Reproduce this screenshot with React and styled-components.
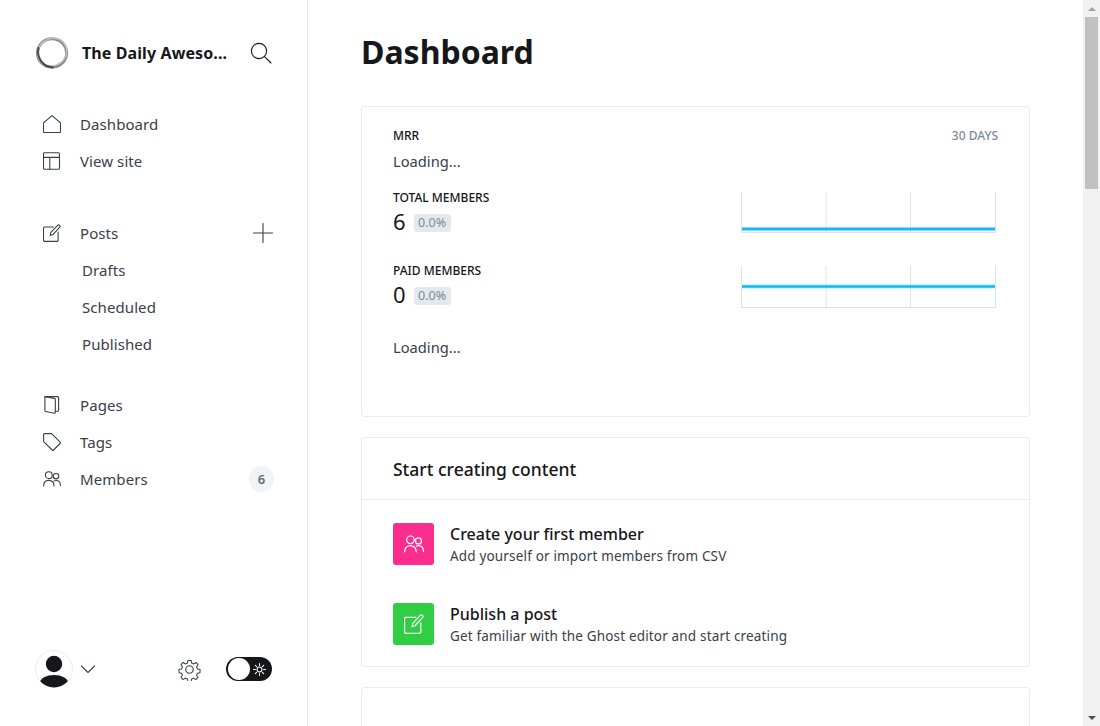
import React from 'react';
import styled, { createGlobalStyle } from 'styled-components';

const GlobalStyle = createGlobalStyle`
  html, body {
    margin: 0;
    height: 100%;
    overflow: hidden;
    background: #fff;
    font-family: "Noto Sans", "Open Sans", sans-serif;
    color: #15171a;
  }
  * { box-sizing: border-box; }
`;

const Page = styled.div`
  display: flex;
  width: 1100px;
  height: 726px;
  overflow: hidden;
`;

const Sidebar = styled.aside`
  flex: 0 0 308px;
  display: flex;
  flex-direction: column;
  padding: 36px 33px 38px 35px;
  border-right: 1px solid #e9ecef;
`;

const Brand = styled.div`
  display: flex;
  align-items: center;
  height: 34px;
  margin-bottom: 35px;
`;

const BrandName = styled.span`
  margin-left: 13px;
  width: 150px;
  font-size: 16px;
  font-weight: 700;
  letter-spacing: 0.1px;
  white-space: nowrap;
`;

const SearchButton = styled.span`
  display: flex;
  margin-left: 18px;
`;

const NavGroup = styled.nav`
  display: flex;
  flex-direction: column;
  margin-top: ${(p) => p.$gap || 0}px;
`;

const NavRow = styled.div`
  display: flex;
  align-items: center;
  height: 37px;
  padding-left: ${(p) => (p.$sub ? 47 : 8)}px;
  font-size: 15px;
  letter-spacing: 0.08px;
  color: #394047;
`;

const NavIcon = styled.span`
  display: flex;
  width: 18px;
  margin-right: 19px;
`;

const NavEnd = styled.span`
  display: flex;
  margin-left: auto;
  margin-right: ${(p) => p.$right || 0}px;
`;

const Badge = styled.span`
  display: flex;
  align-items: center;
  justify-content: center;
  width: 25px;
  height: 26px;
  border-radius: 50%;
  background: #f1f3f4;
  color: #626d79;
  font-size: 13px;
  font-weight: 600;
`;

const SideFooter = styled.div`
  display: flex;
  align-items: center;
  margin-top: auto;
`;

const UserMenu = styled.div`
  display: flex;
  align-items: center;
  gap: 8px;
  margin-right: auto;
`;

const Toggle = styled.div`
  display: flex;
  align-items: center;
  justify-content: space-between;
  width: 46px;
  height: 24px;
  margin: 0 2px 0 25px;
  padding: 0 6px 0 2px;
  border-radius: 12px;
  background: #15171a;
`;

const Knob = styled.span`
  width: 22px;
  height: 22px;
  border-radius: 50%;
  background: #fff;
`;

const Main = styled.main`
  flex: 1;
  min-width: 0;
  height: 726px;
  overflow: hidden;
  padding: 30px 53px 0 53px;
`;

const Title = styled.h1`
  margin: 0 0 32px;
  font-size: 32px;
  line-height: 44px;
  font-weight: 700;
`;

const Card = styled.section`
  border: 1px solid #e9ecef;
  border-radius: 3px;
  margin-bottom: 20px;
  min-height: ${(p) => p.$height || 0}px;
`;

const MetricsBody = styled.div`
  padding: 20px 31px 0;
`;

const MetricHead = styled.div`
  display: flex;
  justify-content: space-between;
`;

const Label = styled.div`
  font-size: 12px;
  line-height: 18px;
  font-weight: 500;
  color: #15171a;
`;

const Range = styled.div`
  font-size: 12px;
  line-height: 18px;
  font-weight: 500;
  color: #7c8b9a;
`;

const Loading = styled.div`
  font-size: 14.7px;
  line-height: 20px;
  color: #394047;
  margin-top: ${(p) => p.$top}px;
  margin-bottom: ${(p) => p.$bottom || 0}px;
`;

const StatRow = styled.div`
  display: flex;
  justify-content: space-between;
  height: 73px;
`;

const NumberLine = styled.div`
  display: flex;
  align-items: center;
  gap: 8px;
  margin-top: 1px;
`;

const Value = styled.span`
  font-size: 22px;
  line-height: 26px;
`;

const Pill = styled.span`
  width: 37px;
  height: 18px;
  margin-top: 4px;
  border-radius: 3px;
  background: #e5e9ed;
  color: #7c8b9a;
  font-size: 12.5px;
  line-height: 18px;
  text-align: center;
`;

const ChartWrap = styled.div`
  display: flex;
  margin: ${(p) => p.$top}px 2px 0 0;
`;

const CardHead = styled.div`
  display: flex;
  align-items: center;
  height: 62px;
  padding: 1px 31px 0;
  border-bottom: 1px solid #e9ecef;
  font-size: 17.5px;
  font-weight: 500;
`;

const ActionList = styled.div`
  display: flex;
  flex-direction: column;
  gap: 38px;
  padding: 23px 31px 21px;
`;

const Action = styled.div`
  display: flex;
  align-items: flex-start;
  gap: 16px;
  height: 42px;
`;

const Tile = styled.span`
  display: flex;
  align-items: center;
  justify-content: center;
  width: 41px;
  height: 42px;
  border-radius: 3px;
  background: ${(p) => p.$color};
`;

const ActionTitle = styled.div`
  font-size: 16px;
  line-height: 22px;
  font-weight: 500;
`;

const ActionText = styled.div`
  font-size: 13.5px;
  line-height: 22px;
  letter-spacing: 0.17px;
  color: #394047;
`;

const HiddenHead = styled.div`
  padding: 34px 31px 20px;
  font-size: 17.5px;
  line-height: 24px;
  font-weight: 500;
`;

const ScrollTrack = styled.div`
  flex: 0 0 17px;
  display: flex;
  flex-direction: column;
  align-items: center;
  background: #f1f1f1;
`;

const ScrollButton = styled.div`
  display: flex;
  align-items: center;
  justify-content: center;
  flex: 0 0 17px;
  margin-top: ${(p) => (p.$end ? 'auto' : 0)};
`;

const Arrow = styled.span`
  width: 0;
  height: 0;
  border-left: 4px solid transparent;
  border-right: 4px solid transparent;
  border-${(p) => (p.$down ? 'top' : 'bottom')}: 4px solid ${(p) => (p.$down ? '#505050' : '#a3a3a3')};
`;

const ScrollThumb = styled.div`
  width: 13px;
  height: 172px;
  background: #c1c1c1;
`;

const Line = ({ size = 18, color = '#394047', width = 1.1, children, view = '0 0 18 18' }) => (
  <svg width={size} height={size} viewBox={view} fill="none" stroke={color} strokeWidth={width} strokeLinecap="round" strokeLinejoin="round">
    {children}
  </svg>
);

const HomeIcon = () => (
  <Line><path d="M.5 7.8 9 .6l8.5 7.2v8.7a1 1 0 0 1-1 1h-15a1 1 0 0 1-1-1Z" /></Line>
);
const LayoutIcon = () => (
  <Line><rect x=".5" y=".8" width="16" height="16.4" rx="1" /><path d="M.5 5.4h16M6.8 5.4v11.8" /></Line>
);
const EditIcon = ({ color, size }) => (
  <Line color={color} size={size}>
    <path d="M10.5 3H1.7a1.2 1.2 0 0 0-1.2 1.2v12a1.2 1.2 0 0 0 1.2 1.2h12.2a1.2 1.2 0 0 0 1.2-1.2V8" />
    <path d="M7.2 11.5 7.9 8.4 14.6 1.3a1.4 1.4 0 0 1 2 2L9.9 10.6Z" />
  </Line>
);
const PagesIcon = () => (
  <Line>
    <path d="M2 .6h12.6a1 1 0 0 1 1 1v12.6a1 1 0 0 1-1 1h-2.3" />
    <path d="M2 .6 11.4 2.4a1 1 0 0 1 .9 1v13a.8.8 0 0 1-1 .8l-8.6-1.7a1 1 0 0 1-.8-1V1.4A.8.8 0 0 1 2 .6Z" />
  </Line>
);
const TagIcon = () => (
  <Line><path d="M.6 1.6a1 1 0 0 1 1-1h6.6a1 1 0 0 1 .7.3l8.2 8.2a1 1 0 0 1 0 1.4l-6.5 6.5a1 1 0 0 1-1.4 0L.9 8.8a1 1 0 0 1-.3-.7Z" /></Line>
);
const MembersIcon = ({ color, size }) => (
  <Line color={color} size={size}>
    <circle cx="5.8" cy="5.2" r="3.4" />
    <path d="M.6 16c0-3.4 2.2-5.6 5.2-5.6S11 12.6 11 16" />
    <circle cx="13" cy="6.2" r="2.7" />
    <path d="M11.2 10.9c.6-.3 1.2-.4 1.9-.4 2.5 0 4.3 2 4.3 5.1" />
  </Line>
);
const GearIcon = () => (
  <Line size={23} view="0 0 24 24" width={1.2}>
    <circle cx="12" cy="12" r="3.9" />
    <path d="M10.2 1.6h3.6l.6 3 2.3 1 2.6-1.7 2.5 2.6-1.7 2.5 1 2.4 3 .6v0l-.1 3.6-2.9.6-1 2.4 1.7 2.5-2.6 2.5-2.5-1.7-2.3 1-.6 3h-3.6l-.6-3-2.3-1-2.6 1.7-2.5-2.5 1.7-2.5-1-2.4-3-.6v-3.6l3-.6 1-2.4-1.7-2.5 2.5-2.6 2.6 1.7 2.3-1Z" transform="translate(1.1 1.1) scale(.91)" />
  </Line>
);
const SunIcon = () => (
  <Line size={13} color="#fff" view="0 0 14 14" width={1.1}>
    <circle cx="7" cy="7" r="2.6" />
    <path d="M7 .6v2M7 11.4v2M.6 7h2M11.4 7h2M2.5 2.5 3.9 3.9M10.1 10.1l1.4 1.4M2.5 11.5l1.4-1.4M10.1 3.9l1.4-1.4" />
  </Line>
);

const SiteLogo = () => (
  <svg width="34" height="34" viewBox="0 0 34 34" fill="none">
    <ellipse cx="17" cy="17" rx="14.6" ry="14.2" stroke="#8a8a8a" strokeWidth="3" />
    <ellipse cx="17.5" cy="16.5" rx="15" ry="13.6" stroke="#bdbdbd" strokeWidth="1.6" transform="rotate(-35 17 17)" />
    <path d="M3.4 12C1.6 22 8 31.4 18 31.2" stroke="#4a4a4a" strokeWidth="2" strokeLinecap="round" />
  </svg>
);

const Avatar = () => (
  <svg width="38" height="38" viewBox="0 0 38 38">
    <defs>
      <clipPath id="avatar-clip"><circle cx="19" cy="19" r="18.5" /></clipPath>
    </defs>
    <circle cx="19" cy="19" r="18.5" fill="#fff" stroke="#ececec" />
    <g clipPath="url(#avatar-clip)" fill="#15171a">
      <circle cx="19" cy="14" r="8.2" />
      <ellipse cx="19" cy="32.5" rx="14" ry="7.5" />
    </g>
  </svg>
);

const Sparkline = ({ height, lineY }) => (
  <svg width="255" height={height} viewBox={`0 0 255 ${height}`} fill="none">
    <path d={`M.5 0V${height}M85 0V${height}M169.5 0V${height}M254.5 0V${height}M0 ${height - 0.5}H255`} stroke="#dfe3e7" />
    <path d={`M1 ${lineY}H254`} stroke="#14b8ff" strokeOpacity="0.35" strokeWidth="4" />
    <path d={`M1 ${lineY}H254`} stroke="#14b8ff" strokeWidth="2.4" />
  </svg>
);

const stats = [
  { label: 'TOTAL MEMBERS', value: 6, chartTop: 3, chartHeight: 41, lineY: 37 },
  { label: 'PAID MEMBERS', value: 0, chartTop: 4, chartHeight: 42, lineY: 20.5 },
];

const App = () => (
  <Page>
    <GlobalStyle />
    <Sidebar>
      <Brand>
        <SiteLogo />
        <BrandName>The Daily Aweso...</BrandName>
        <SearchButton>
          <Line size={22} color="#15171a" view="0 0 22 22">
            <circle cx="9" cy="9" r="7.6" />
            <path d="m14.6 14.6 6.4 6.4" />
          </Line>
        </SearchButton>
      </Brand>
      <NavGroup>
        <NavRow><NavIcon><HomeIcon /></NavIcon>Dashboard</NavRow>
        <NavRow><NavIcon><LayoutIcon /></NavIcon>View site</NavRow>
      </NavGroup>
      <NavGroup $gap={35}>
        <NavRow>
          <NavIcon><EditIcon /></NavIcon>Posts
          <NavEnd $right={1}>
            <Line size={20} view="0 0 20 20"><path d="M10 .5v19M.5 10h19" /></Line>
          </NavEnd>
        </NavRow>
        <NavRow $sub>Drafts</NavRow>
        <NavRow $sub>Scheduled</NavRow>
        <NavRow $sub>Published</NavRow>
      </NavGroup>
      <NavGroup $gap={24}>
        <NavRow><NavIcon><PagesIcon /></NavIcon>Pages</NavRow>
        <NavRow><NavIcon><TagIcon /></NavIcon>Tags</NavRow>
        <NavRow><NavIcon><MembersIcon /></NavIcon>Members<NavEnd><Badge>6</Badge></NavEnd></NavRow>
      </NavGroup>
      <SideFooter>
        <UserMenu>
          <Avatar />
          <Line size={14} view="0 0 14 14"><path d="m.5 4 6.5 6.5L13.5 4" /></Line>
        </UserMenu>
        <GearIcon />
        <Toggle><Knob /><SunIcon /></Toggle>
      </SideFooter>
    </Sidebar>
    <Main>
      <Title>Dashboard</Title>
      <Card $height={311}>
        <MetricsBody>
          <MetricHead>
            <Label>MRR</Label>
            <Range>30 DAYS</Range>
          </MetricHead>
          <Loading $top={6} $bottom={18}>Loading...</Loading>
          {stats.map((s) => (
            <StatRow key={s.label}>
              <div>
                <Label>{s.label}</Label>
                <NumberLine>
                  <Value>{s.value}</Value>
                  <Pill>0.0%</Pill>
                </NumberLine>
              </div>
              <ChartWrap $top={s.chartTop}><Sparkline height={s.chartHeight} lineY={s.lineY} /></ChartWrap>
            </StatRow>
          ))}
          <Loading $top={2}>Loading...</Loading>
        </MetricsBody>
      </Card>
      <Card>
        <CardHead>Start creating content</CardHead>
        <ActionList>
          <Action>
            <Tile $color="#fb2d8d"><MembersIcon color="#fff" size={20} /></Tile>
            <div>
              <ActionTitle>Create your first member</ActionTitle>
              <ActionText>Add yourself or import members from CSV</ActionText>
            </div>
          </Action>
          <Action>
            <Tile $color="#30cf43"><EditIcon color="#fff" size={20} /></Tile>
            <div>
              <ActionTitle>Publish a post</ActionTitle>
              <ActionText>Get familiar with the Ghost editor and start creating</ActionText>
            </div>
          </Action>
        </ActionList>
      </Card>
      <Card>
        <HiddenHead>Customize your site</HiddenHead>
      </Card>
    </Main>
    <ScrollTrack>
      <ScrollButton><Arrow /></ScrollButton>
      <ScrollThumb />
      <ScrollButton $end><Arrow $down /></ScrollButton>
    </ScrollTrack>
  </Page>
);

export default App;
